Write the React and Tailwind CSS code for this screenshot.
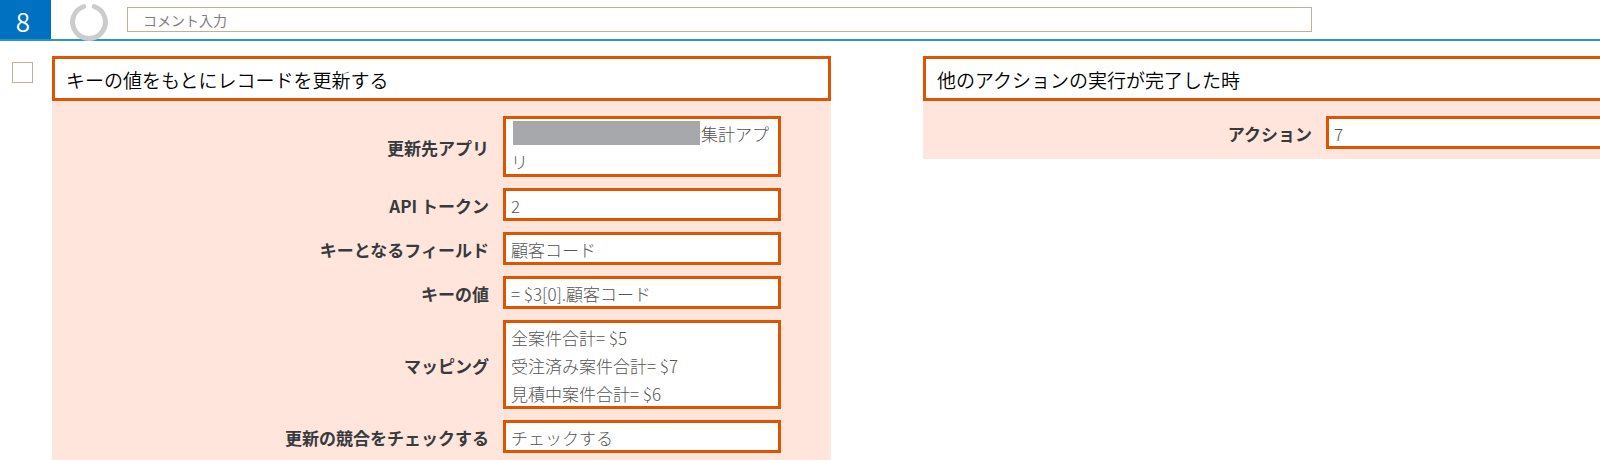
import { useState } from 'react';

const updateFields = [
  { id: 'app', label: '更新先アプリ', lines: ['集計アプリ'], masked: true },
  { id: 'token', label: 'API トークン', lines: ['2'] },
  { id: 'key-field', label: 'キーとなるフィールド', lines: ['顧客コード'] },
  { id: 'key-value', label: 'キーの値', lines: ['= $3[0].顧客コード'] },
  { id: 'mapping', label: 'マッピング', lines: ['全案件合計= $5', '受注済み案件合計= $7', '見積中案件合計= $6'] },
  { id: 'conflict', label: '更新の競合をチェックする', lines: ['チェックする'] },
];

const triggerFields = [{ id: 'action', label: 'アクション', lines: ['7'] }];

const Spinner = () => (
  <svg width="38" height="38" viewBox="0 0 38 38" fill="none" className="shrink-0">
    <path d="M24.2 3.5A16.4 16.4 0 1 1 13.8 3.5" stroke="#cccccc" strokeWidth="5" strokeLinecap="round" />
  </svg>
);

const FieldRow = ({ field, labelClass, valueClass }) => (
  <div className="flex items-center">
    <dt className={`${labelClass} pt-0.5 pr-[14px] text-right font-bold text-[#363b3d]`}>{field.label}</dt>
    <dd className={`${valueClass} border-3 border-[#dd5500] bg-white px-[5px] pt-px font-light text-[#555555]`}>
      <div className="-mb-0.5">
        {field.masked && <span className="mt-px ml-[2px] mr-px inline-block h-6 w-[187px] bg-[#a7a8ac] align-top" />}
        {field.lines.map((line) => (
          <span key={line} className={field.masked ? 'break-all' : 'block'}>{line}</span>
        ))}
      </div>
    </dd>
  </div>
);

const ActionPanel = ({ title, fields, className, labelClass, valueClass }) => (
  <section className="bg-[#ffe5dc]">
    <h2 className="border-3 border-[#dd5500] bg-white px-[11px] pt-[7px] pb-[4px] text-[19px] leading-7 font-[350] text-black">{title}</h2>
    <dl className={`${className} flex flex-col gap-[11px] pt-[15px] pb-[10px] text-[17px] leading-7`}>
      {fields.map((field) => (
        <FieldRow key={field.id} field={field} labelClass={labelClass} valueClass={valueClass} />
      ))}
    </dl>
  </section>
);

const App = () => {
  const [comment, setComment] = useState('');
  const [checked, setChecked] = useState(false);

  return (
    <main className="overflow-hidden bg-white font-['Noto_Sans_CJK_JP',sans-serif]">
      <header className="flex h-[41px] border-b-2 border-[#2b93d3]">
        <div className="flex w-[51px] shrink-0 items-center justify-center bg-[#0070c0] pt-0.5 pr-[5px] text-[26px] leading-9 font-[350] text-white">8</div>
        <div className="ml-[19px] pt-[3px]">
          <Spinner />
        </div>
        <input
          type="text"
          aria-label="コメント入力"
          placeholder="コメント入力"
          value={comment}
          onChange={(e) => setComment(e.target.value)}
          className="mt-[7px] mr-72 ml-[19px] h-[25px] min-w-0 flex-1 border border-[#c8ad96] px-[15px] text-sm placeholder:text-[#808080]"
        />
      </header>
      <div className="-mr-[3px] flex pt-[15px]">
        <input
          type="checkbox"
          aria-label="キーの値をもとにレコードを更新する"
          checked={checked}
          onChange={(e) => setChecked(e.target.checked)}
          className="mt-[6px] mr-[19px] ml-3 size-[21px] shrink-0 appearance-none border border-[#c8ad96] checked:bg-[#c8ad96]"
        />
        <div className="grid flex-1 grid-cols-[779fr_680fr] items-start gap-x-[92px]">
          <ActionPanel
            title="キーの値をもとにレコードを更新する"
            fields={updateFields}
            className="pr-[50px]"
            labelClass="flex-1"
            valueClass="w-[278px] shrink-0"
          />
          <ActionPanel
            title="他のアクションの実行が完了した時"
            fields={triggerFields}
            labelClass="w-[403px] shrink-0"
            valueClass="flex-1"
          />
        </div>
      </div>
    </main>
  );
};

export default App;
